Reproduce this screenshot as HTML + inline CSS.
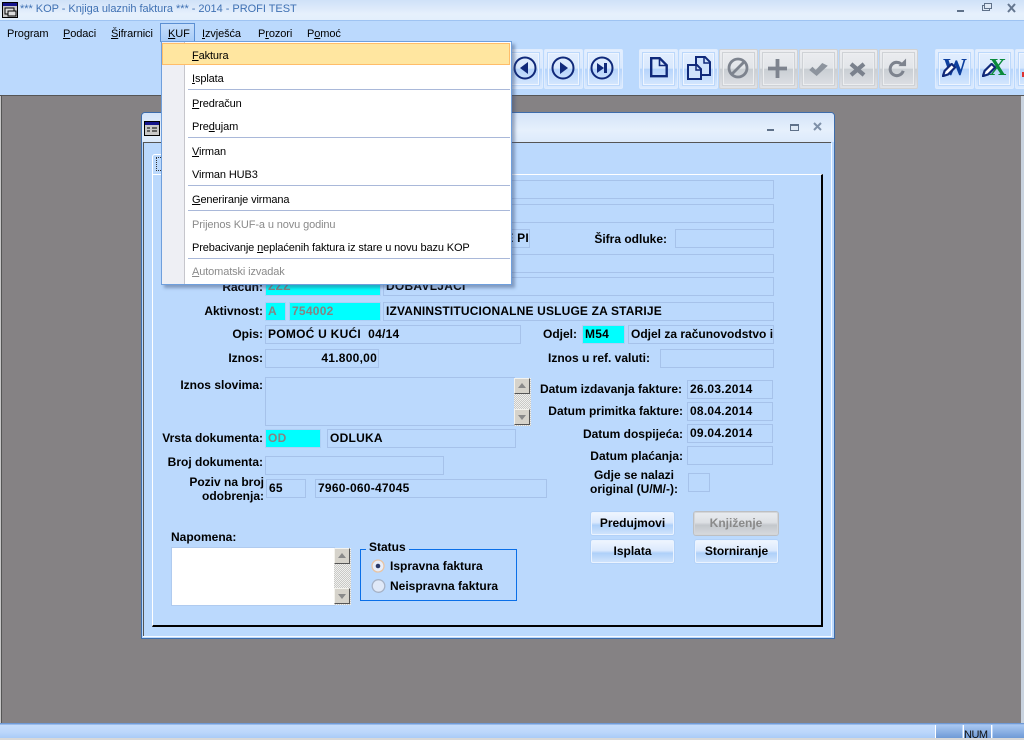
<!DOCTYPE html>
<html><head><meta charset="utf-8"><title>KOP</title>
<style>
html,body{margin:0;padding:0;width:1024px;height:740px;overflow:hidden;background:#858284}
body{position:relative;font-family:"Liberation Sans",sans-serif;color:#000}
div,span,svg{position:absolute;box-sizing:border-box}
u{text-decoration:underline}
.f{border:1px solid #a6c2ea;background:#bbd9fd;font:bold 12px/15px "Liberation Sans",sans-serif;letter-spacing:.25px;padding:1px 0 0 2px;white-space:nowrap;overflow:hidden;color:#000}
.c{background:#00ffff;color:#848484;border-color:#b0cff5}
.l{font:bold 12px/14px "Liberation Sans",sans-serif;text-align:right;white-space:nowrap;color:#000}
.m{left:192px;font:11px/14px "Liberation Sans",sans-serif;letter-spacing:-.12px;white-space:nowrap;color:#000}
.g{color:#8a8a8a}
.s{left:188px;width:322px;height:1px;background:#a9b8d9}
.mb{top:27px;font:11px/14px "Liberation Sans",sans-serif;letter-spacing:-.1px;white-space:nowrap}
.tb{top:49px;width:39px;height:40px;border:1px solid #dfecfe;border-radius:2px;background:linear-gradient(#e4effe 0,#d8e8fd 48%,#b6d4fb 50%,#dbeafe 100%)}
.tb i{position:absolute;left:3px;top:3px;right:3px;bottom:3px;border:1px solid #eef5ff;outline:1px solid #bcd8fb;display:block}
.td{border-color:#d2d2d2;background:linear-gradient(#ecedf0 0,#e2e5e9 48%,#c9ced3 50%,#e0e2e6 100%)}
.td i{border-color:#eceef0;outline-color:#cfd2d6}
.b{border:1px solid #eaf3ff;border-radius:2px;background:linear-gradient(#eef5fe 0,#dbe9fd 45%,#aed0f9 58%,#cfe3fc 100%);font:bold 12px/20px "Liberation Sans",sans-serif;text-align:center;height:23px;box-shadow:0 0 0 1px #b2d1f8}
.sb{width:16px;height:16px;background:#d6d3cb;border:1px solid;border-color:#f4f3ee #555 #555 #f4f3ee}
.sc{background:repeating-conic-gradient(#c9c9c6 0 25%,#f0f0ee 0 50%) 0 0/2px 2px}
.ar{left:3px;width:0;height:0;border-left:4px solid transparent;border-right:4px solid transparent}
</style></head><body>

<!-- title bar -->
<div style="left:0;top:0;width:1024px;height:21px;background:linear-gradient(#cfe1f8,#e6f0fc 70%,#e3effc);border-bottom:1px solid #9ec3f2"></div>
<svg style="left:2px;top:2px" width="16" height="16" viewBox="0 0 16 16"><rect x=".5" y=".5" width="15" height="15" fill="#c9c9c9" stroke="#000"/><rect x="1" y="1" width="14" height="3" fill="#14148c"/><rect x="3" y="6" width="9" height="6" fill="#ddd" stroke="#000"/><rect x="6" y="9" width="8" height="5" fill="#ddd" stroke="#000"/></svg>
<div style="left:20px;top:1px;font:11px/16px 'Liberation Sans',sans-serif;letter-spacing:-.03px;color:#3f71b3;white-space:nowrap">*** KOP - Knjiga ulaznih faktura *** - 2014 - PROFI TEST</div>
<svg style="left:950px;top:0" width="74" height="18" viewBox="0 0 74 18"><rect x="7" y="10" width="7" height="2" fill="#5f7189"/><rect x="32.500" y="5.500" width="7" height="5" fill="#dfe9f5" stroke="#5f7189"/><rect x="34.500" y="3.500" width="7" height="5" fill="#dfe9f5" stroke="#5f7189"/><path d="M58 4l7 8M65 4l-7 8" stroke="#64768f" stroke-width="2" fill="none"/></svg>

<!-- toolbar -->
<div style="left:0;top:21px;width:1024px;height:74px;background:#bbd9fd"></div>
<div style="left:0;top:95px;width:1024px;height:1px;background:#555"></div>
<div style="left:0;top:96px;width:1px;height:627px;background:#c8c8c8"></div>
<div style="left:1px;top:96px;width:1px;height:627px;background:#555"></div>
<div style="left:1021px;top:96px;width:3px;height:627px;background:#c9d3df"></div>

<div class="mb" style="left:7px">Program</div>
<div class="mb" style="left:63px"><u>P</u>odaci</div>
<div class="mb" style="left:111px"><u>Š</u>ifrarnici</div>
<div style="left:160px;top:23px;width:35px;height:19px;border:1px solid #5b8fd3;border-bottom:0;background:linear-gradient(#c5defc,#a7cbf7)"></div>
<div class="mb" style="left:168px"><u>K</u>UF</div>
<div class="mb" style="left:202px"><u>I</u>zvješća</div>
<div class="mb" style="left:258px">P<u>r</u>ozori</div>
<div class="mb" style="left:307px">P<u>o</u>moć</div>

<!-- toolbar buttons -->
<div class="tb" style="left:504px"><i></i></div>
<div class="tb" style="left:544px"><i></i></div>
<div class="tb" style="left:584px"><i></i></div>
<svg style="left:513px;top:56px" width="24" height="24" viewBox="0 0 24 24"><circle cx="12" cy="12" r="10.500" fill="none" stroke="#10297a" stroke-width="2"/><path d="M7 12l8-6v12z" fill="#10297a"/></svg>
<svg style="left:551px;top:56px" width="24" height="24" viewBox="0 0 24 24"><circle cx="12" cy="12" r="10.500" fill="none" stroke="#10297a" stroke-width="2"/><path d="M17 12l-8-6v12z" fill="#10297a"/></svg>
<svg style="left:590px;top:56px" width="24" height="24" viewBox="0 0 24 24"><circle cx="12" cy="12" r="10.500" fill="none" stroke="#10297a" stroke-width="2"/><path d="M14 12l-7-5v10z" fill="#10297a"/><rect x="14" y="7" width="3" height="10" fill="#10297a"/></svg>

<div class="tb" style="left:639px"><i></i></div>
<div class="tb" style="left:679px"><i></i></div>
<svg style="left:649px;top:57px" width="20" height="21" viewBox="0 0 20 21"><path d="M2.200 1.200h8.500l7 7v11H2.200z" fill="none" stroke="#10297a" stroke-width="2.400"/><path d="M10.500 2v6.500h7" fill="none" stroke="#10297a" stroke-width="1.600"/></svg>
<svg style="left:687px;top:56px" width="24" height="24" viewBox="0 0 24 24"><path d="M9 8V1h9l5 5v13h-8" fill="#cfe2fb" stroke="#10297a" stroke-width="2"/><path d="M17 1v6h6" fill="none" stroke="#10297a" stroke-width="1.500"/><path d="M1 9h9l4 4v10H1z" fill="#cfe2fb" stroke="#10297a" stroke-width="2"/><path d="M9 9v5h5" fill="none" stroke="#10297a" stroke-width="1.500"/></svg>

<div class="tb td" style="left:719px"><i></i></div>
<div class="tb td" style="left:759px"><i></i></div>
<div class="tb td" style="left:799px"><i></i></div>
<div class="tb td" style="left:839px"><i></i></div>
<div class="tb td" style="left:879px"><i></i></div>
<svg style="left:727px;top:57px" width="22" height="22" viewBox="0 0 22 22"><circle cx="11" cy="11" r="9" fill="none" stroke="#7d838e" stroke-width="2.800"/><path d="M5 17L17 5" stroke="#7d838e" stroke-width="2.800"/></svg>
<svg style="left:768px;top:59px" width="19" height="19" viewBox="0 0 20 20"><path d="M8 0h4v8h8v4h-8v8H8v-8H0V8h8z" fill="#7d838e"/></svg>
<svg style="left:809px;top:63px" width="19" height="13" viewBox="0 0 20 14"><path d="M0 7.500l3.500-3.500 3.500 3.500L14 0l6 3-12 11z" fill="#8d949e"/></svg>
<svg style="left:849px;top:62px" width="17" height="15" viewBox="0 0 17 15"><path d="M2 2l13 11M15 2L2 13" stroke="#7a818d" stroke-width="4.200" fill="none"/></svg>
<svg style="left:888px;top:58px" width="19" height="20" viewBox="0 0 20 20"><path d="M15 7a7 7 0 1 0 1 6" fill="none" stroke="#7d838e" stroke-width="3.200"/><path d="M11 8h8V0z" fill="#7d838e"/></svg>

<div class="tb" style="left:935px"><i></i></div>
<div class="tb" style="left:975px"><i></i></div>
<div class="tb" style="left:1015px;width:20px"><i></i></div>
<div style="left:943px;top:54px;font:bold 24px/28px 'Liberation Serif',serif;color:#0d3f9e">W</div>
<svg style="left:942px;top:63px" width="14" height="14" viewBox="0 0 16 16"><path d="M1 15l2-6 8-8 4 4-8 8z" fill="#fff" stroke="#10297a" stroke-width="2.500"/></svg>
<div style="left:989px;top:54px;font:bold 24px/28px 'Liberation Serif',serif;color:#0a8a3a">X</div>
<svg style="left:982px;top:63px" width="14" height="14" viewBox="0 0 16 16"><path d="M1 15l2-6 8-8 4 4-8 8z" fill="#fff" stroke="#10297a" stroke-width="2.500"/></svg>
<div style="left:1022px;top:72px;width:2px;height:5px;background:#d33"></div>

<!-- MDI window -->
<div style="left:141px;top:112px;width:694px;height:527px;background:#bbd9fd;border:1px solid #3d6cab;border-radius:4px 4px 0 0"></div>
<div style="left:142px;top:113px;width:692px;height:29px;background:linear-gradient(#d4e4f9,#e6f0fc 60%,#dceafb);border-radius:3px 3px 0 0"></div>
<svg style="left:144px;top:121px" width="16" height="15" viewBox="0 0 16 15"><rect x=".5" y=".5" width="15" height="14" fill="#c9c9c9" stroke="#000"/><rect x="1" y="1" width="14" height="3" fill="#14148c"/><path d="M3 7h3M3 10h3M8 7h5M8 10h5" stroke="#000"/></svg>
<svg style="left:760px;top:118px" width="70" height="18" viewBox="0 0 70 18"><rect x="7" y="11" width="7" height="2" fill="#5f7189"/><rect x="30.500" y="6.500" width="8" height="6" fill="#dfe9f5" stroke="#5f7189"/><rect x="31" y="6" width="8" height="2" fill="#5f7189"/><path d="M54 5l7 7M61 5l-7 7" stroke="#7e90a8" stroke-width="2" fill="none"/></svg>
<div style="left:143px;top:142px;width:688px;height:1px;background:#555"></div>
<div style="left:143px;top:142px;width:1px;height:494px;background:#555"></div>
<div style="left:831px;top:143px;width:1px;height:493px;background:#f5f9ff"></div>
<div style="left:143px;top:636px;width:689px;height:1px;background:#f5f9ff"></div>

<!-- tab page -->
<div style="left:152px;top:174px;width:671px;height:453px;border:1px solid;border-width:1px 2px 2px 1px;border-color:#fff #000 #000 #fff"></div>
<div style="left:152px;top:154px;width:30px;height:21px;border:1px solid #fff;border-bottom:0;border-radius:3px 3px 0 0"></div>
<div style="left:156px;top:157px;width:9px;height:14px;border:1px dotted #333"></div>

<!-- fields -->
<div class="f" style="left:265px;top:180px;width:509px;height:19px"></div>
<div class="f" style="left:265px;top:204px;width:509px;height:19px"></div>
<div class="f" style="left:265px;top:229px;width:265px;height:19px;text-align:right;padding-right:0">E PI</div>
<div class="l" style="left:560px;top:232px;width:107px">Šifra odluke:</div>
<div class="f" style="left:675px;top:229px;width:99px;height:19px"></div>
<div class="f" style="left:265px;top:254px;width:509px;height:19px"></div>

<div class="l" style="left:180px;top:280px;width:83px">Račun:</div>
<div class="f c" style="left:265px;top:277px;width:116px;height:19px">ZZZ</div>
<div class="f" style="left:383px;top:277px;width:391px;height:19px">DOBAVLJAČI</div>

<div class="l" style="left:180px;top:304px;width:83px">Aktivnost:</div>
<div class="f c" style="left:265px;top:302px;width:21px;height:19px">A</div>
<div class="f c" style="left:289px;top:302px;width:92px;height:19px">754002</div>
<div class="f" style="left:383px;top:302px;width:391px;height:19px;letter-spacing:.16px">IZVANINSTITUCIONALNE USLUGE ZA STARIJE</div>

<div class="l" style="left:180px;top:327px;width:83px">Opis:</div>
<div class="f" style="left:265px;top:325px;width:256px;height:19px">POMOĆ U KUĆI&nbsp; 04/14</div>
<div class="l" style="left:520px;top:327px;width:57px">Odjel:</div>
<div class="f c" style="left:582px;top:325px;width:43px;height:19px;color:#000">M54</div>
<div class="f" style="left:628px;top:325px;width:146px;height:19px;letter-spacing:0">Odjel za računovodstvo i</div>

<div class="l" style="left:180px;top:351px;width:83px">Iznos:</div>
<div class="f" style="left:265px;top:349px;width:114px;height:19px;text-align:right;padding-right:1px">41.800,00</div>
<div class="l" style="left:530px;top:351px;width:120px">Iznos u ref. valuti:</div>
<div class="f" style="left:660px;top:349px;width:114px;height:19px"></div>

<div class="l" style="left:170px;top:378px;width:93px">Iznos slovima:</div>
<div class="f" style="left:265px;top:377px;width:250px;height:49px"></div>
<div class="sc" style="left:514px;top:378px;width:17px;height:48px"></div>
<div class="sb" style="left:514px;top:378px"><div class="ar" style="top:4px;border-bottom:5px solid #8a8a8a"></div></div>
<div class="sb" style="left:514px;top:409px"><div class="ar" style="top:5px;border-top:5px solid #8a8a8a"></div></div>

<div class="l" style="left:150px;top:431px;width:113px">Vrsta dokumenta:</div>
<div class="f c" style="left:265px;top:429px;width:56px;height:19px">OD</div>
<div class="f" style="left:327px;top:429px;width:189px;height:19px">ODLUKA</div>

<div class="l" style="left:150px;top:455px;width:113px">Broj dokumenta:</div>
<div class="f" style="left:265px;top:456px;width:179px;height:19px"></div>

<div class="l" style="left:170px;top:475px;width:94px;line-height:14px">Poziv na broj<br>odobrenja:</div>
<div class="f" style="left:266px;top:479px;width:40px;height:19px">65</div>
<div class="f" style="left:315px;top:479px;width:232px;height:19px">7960-060-47045</div>

<div class="l" style="left:530px;top:382px;width:152px">Datum izdavanja fakture:</div>
<div class="f" style="left:687px;top:380px;width:86px;height:19px">26.03.2014</div>
<div class="l" style="left:530px;top:404px;width:153px">Datum primitka fakture:</div>
<div class="f" style="left:687px;top:402px;width:86px;height:19px">08.04.2014</div>
<div class="l" style="left:530px;top:427px;width:153px">Datum dospijeća:</div>
<div class="f" style="left:687px;top:424px;width:86px;height:19px">09.04.2014</div>
<div class="l" style="left:530px;top:449px;width:153px">Datum plaćanja:</div>
<div class="f" style="left:687px;top:446px;width:86px;height:19px"></div>
<div class="l" style="left:579px;top:468px;width:110px;text-align:center">Gdje se nalazi<br>original (U/M/-):</div>
<div class="f" style="left:688px;top:473px;width:22px;height:19px"></div>

<!-- napomena -->
<div class="l" style="left:171px;top:530px;text-align:left">Napomena:</div>
<div style="left:171px;top:547px;width:164px;height:59px;background:#fff;border:1px solid #b0cbef"></div>
<div class="sc" style="left:334px;top:548px;width:17px;height:57px"></div>
<div class="sb" style="left:334px;top:548px"><div class="ar" style="top:4px;border-bottom:5px solid #8a8a8a"></div></div>
<div class="sb" style="left:334px;top:588px"><div class="ar" style="top:5px;border-top:5px solid #8a8a8a"></div></div>

<!-- status -->
<div style="left:360px;top:549px;width:157px;height:52px;border:1px solid #0a6fe8"></div>
<div class="l" style="left:366px;top:540px;padding:0 3px;background:#bbd9fd">Status</div>
<svg style="left:370px;top:558px" width="16" height="16" viewBox="0 0 16 16"><circle cx="8" cy="8" r="6" fill="#e8eefa" stroke="#e8c4a4" stroke-width="1.300"/><circle cx="8" cy="8" r="2.300" fill="#2a3a6a"/></svg>
<svg style="left:371px;top:578px" width="16" height="16" viewBox="0 0 16 16"><circle cx="7.500" cy="8" r="6.300" fill="#e0e9f8" stroke="#a6b2c6" stroke-width="1.300"/></svg>
<div class="l" style="left:390px;top:559px">Ispravna faktura</div>
<div class="l" style="left:390px;top:579px">Neispravna faktura</div>

<!-- buttons -->
<div class="b" style="left:591px;top:512px;width:83px">Predujmovi</div>
<div class="b" style="left:694px;top:512px;width:84px;color:#8a8a8a;border-color:#d4d6d9;background:linear-gradient(#e8ebef,#dde0e4 45%,#c3c7cc 58%,#d5d8dc);box-shadow:0 0 0 1px #bdbfc2">Knjiženje</div>
<div class="b" style="left:591px;top:540px;width:83px">Isplata</div>
<div class="b" style="left:695px;top:540px;width:83px">Storniranje</div>

<!-- dropdown menu -->
<div style="left:161px;top:41px;width:351px;height:244px;background:#fff;border:1px solid #6f9fdc;box-shadow:3px 3px 3px rgba(60,80,120,.45)"></div>
<div style="left:162px;top:42px;width:23px;height:242px;background:#eeeff4;border-right:1px solid #c6c6cc"></div>
<div style="left:162px;top:43px;width:348px;height:22px;background:#ffe6a0;border:1px solid #ffbd69"></div>
<div class="m" style="top:49px"><u>F</u>aktura</div>
<div class="m" style="top:72px"><u>I</u>splata</div>
<div class="s" style="top:89px"></div>
<div class="m" style="top:97px"><u>P</u>redračun</div>
<div class="m" style="top:120px">Pre<u>d</u>ujam</div>
<div class="s" style="top:137px"></div>
<div class="m" style="top:145px"><u>V</u>irman</div>
<div class="m" style="top:168px">Virman HUB3</div>
<div class="s" style="top:185px"></div>
<div class="m" style="top:193px"><u>G</u>eneriranje virmana</div>
<div class="s" style="top:210px"></div>
<div class="m g" style="top:218px">Prijenos KUF-a u novu <u>g</u>odinu</div>
<div class="m" style="top:241px">Prebacivanje <u>n</u>eplaćenih faktura iz stare u novu bazu KOP</div>
<div class="s" style="top:258px"></div>
<div class="m g" style="top:265px"><u>A</u>utomatski izvadak</div>

<!-- status bar -->
<div style="left:0;top:723px;width:1024px;height:17px;background:linear-gradient(#6f9ad6 0,#6f9ad6 1px,#c6ddfb 2px,#bcd7fb 9px,#a9cbf7 15px,#d8d8d8 15px)"></div>
<div style="left:935px;top:725px;width:27px;height:13px;background:linear-gradient(#a9c8f2,#6f9ad6);border-left:1px solid #fff"></div>
<div style="left:963px;top:725px;width:29px;height:13px;background:linear-gradient(#a9c8f2,#6f9ad6);border-left:1px solid #fff;border-right:1px solid #fff;overflow:hidden"><div style="left:0;top:4px;font:11px/12px 'Liberation Sans',sans-serif;letter-spacing:-.5px;color:#111">NUM</div></div>
<div style="left:993px;top:725px;width:31px;height:13px;background:linear-gradient(#a9c8f2,#6f9ad6)"></div>
</body></html>
